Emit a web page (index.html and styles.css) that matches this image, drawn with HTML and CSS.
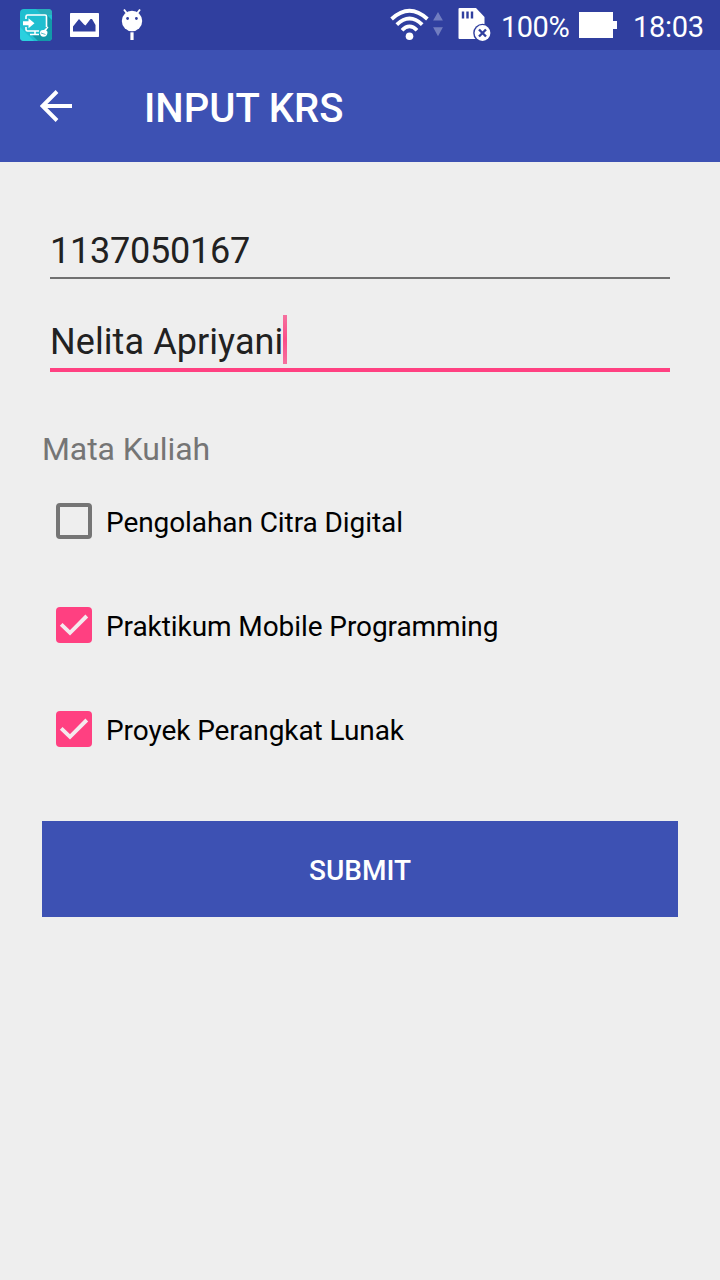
FILE: index.html
```html
<!DOCTYPE html>
<html lang="id">
<head>
<meta charset="utf-8">
<title>Input KRS</title>
<link rel="stylesheet" href="styles.css">
</head>
<body>
<div class="statusbar">
  <svg class="icon-cast" width="32" height="32" viewBox="0 0 32 32">
    <defs><clipPath id="tile"><rect width="32" height="32" rx="4"/></clipPath></defs>
    <g clip-path="url(#tile)">
      <rect width="32" height="32" fill="#1fbfd0"/>
      <path d="M0 18L14 32H0z" fill="#2bd0df"/>
      <path d="M26 5l6 6v21H18l-7-7h15z" fill="#129aa9"/>
      <path d="M16 0h16v6H22z" fill="#29aebb"/>
    </g>
    <path d="M6 10V7.500Q6 6 7.500 6H25Q26.500 6 26.500 7.500V18M6 18V20.500Q6 22 7.500 22H19M15 22v3M10 25.500h9" fill="none" stroke="#fff" stroke-width="1.600"/>
    <path d="M3 12.300h5.500V9.300l6 5-6 5v-3H3z" fill="#fff"/>
    <path d="M20 24q0-3 3-3h1l3.500-3.500 1 .8-2.300 3.200 1.300 1.300q0 5-4 5-3.500 0-3.500-4z" fill="#fff"/>
    <path d="M21 24l4.500 1.500" stroke="#159fae" stroke-width=".7"/>
  </svg>
  <svg class="icon-image" width="29" height="24" viewBox="0 0 29 24">
    <path fill="#fff" d="M.7 0h27.600q.7 0 .7.700v22.600q0 .7-.7.700H.700Q0 24 0 23.300V.700Q0 0 .7 0z"/>
    <path fill="#303f9f" d="M3 18.500V13.500L9 6l5 5.500 1.500 1 5-6.500h1.500l3.500 6v6.500z"/>
  </svg>
  <svg class="icon-droid" width="22" height="32" viewBox="0 0 22 32">
    <path d="M3 1.500l3 4M19 1.500l-3 4" stroke="#fff" stroke-width="1.900"/>
    <ellipse cx="11" cy="13" rx="10.200" ry="10.300" fill="#fff"/>
    <circle cx="6.600" cy="10.500" r="1.400" fill="#303f9f"/>
    <circle cx="15.400" cy="10.500" r="1.400" fill="#303f9f"/>
    <rect x="9.400" y="24.300" width="3.200" height="7.700" fill="#fff"/>
  </svg>
  <svg class="icon-wifi" width="54" height="34" viewBox="0 0 54 34">
    <g fill="none" stroke="#fff" stroke-width="3.800">
      <path d="M1.600 12Q19.500-4.500 37.400 12"/>
      <path d="M6.800 17.700Q19.500 5.500 32.200 17.700"/>
      <path d="M12 23.300Q19.500 15.500 27 23.300"/>
    </g>
    <circle cx="19.500" cy="29.300" r="3.800" fill="#fff"/>
    <path d="M48 5l4.900 8.600h-9.800zM43.100 20.200h9.800L48 29.200z" fill="#717dc0"/>
  </svg>
  <svg class="icon-sd" width="34" height="34" viewBox="0 0 34 34">
    <path d="M1.500 0H18l8.500 9v22H1.500Q.5 31 .5 30V1q0-1 1-1z" fill="#fff"/>
    <path d="M5 3.500v7M9.500 3.500v7M14 3.500v7" stroke="#303f9f" stroke-width="2.400"/>
    <circle cx="24.500" cy="25" r="9.300" fill="#303f9f"/>
    <circle cx="24.500" cy="25" r="7.900" fill="#fff"/>
    <path d="M21 21.500l7 7m0-7l-7 7" stroke="#303f9f" stroke-width="2.400"/>
  </svg>
  <span class="battery-text">100%</span>
  <svg class="icon-battery" width="38" height="26" viewBox="0 0 38 26">
    <path d="M0 0h34v9h4v8h-4v9H0z" fill="#fff"/>
  </svg>
  <span class="clock">18:03</span>
</div>
<header class="appbar">
  <svg class="icon-back" width="32" height="32" viewBox="0 0 32 32">
    <path d="M17 1.500L2.500 16 17 30.500M2.500 16H32" fill="none" stroke="#fff" stroke-width="3.900"/>
  </svg>
  <h1 class="title">INPUT KRS</h1>
</header>
<main class="form">
  <div class="field"><span class="value number">1137050167</span></div>
  <div class="field focused"><span class="value">Nelita Apriyani</span><span class="caret"></span></div>
  <div class="label">Mata Kuliah</div>
  <div class="options">
    <div class="option"><span class="box"></span><span class="option-text">Pengolahan Citra Digital</span></div>
    <div class="option"><span class="box checked"><svg width="36" height="36" viewBox="0 0 36 36"><path d="M5.200 17.300l8.800 8.500L30.800 9" fill="none" stroke="#f5eaee" stroke-width="3.900"/></svg></span><span class="option-text">Praktikum Mobile Programming</span></div>
    <div class="option"><span class="box checked"><svg width="36" height="36" viewBox="0 0 36 36"><path d="M5.200 17.300l8.800 8.500L30.800 9" fill="none" stroke="#f5eaee" stroke-width="3.900"/></svg></span><span class="option-text">Proyek Perangkat Lunak</span></div>
  </div>
  <button class="submit">SUBMIT</button>
</main>
</body>
</html>
```
FILE: styles.css
```css
* { box-sizing: border-box; }
body {
  margin: 0;
  width: 720px;
  height: 1280px;
  background: #eeeeee;
  font-family: Roboto, "Noto Sans", sans-serif;
  overflow: hidden;
  white-space: nowrap;
}
svg { display: block; flex: none; }
.statusbar {
  display: flex;
  align-items: flex-start;
  height: 50px;
  padding-left: 20px;
  background: #303f9f;
  color: #fff;
  font-size: 29px;
  line-height: 34px;
}
.icon-cast { margin-top: 9px; }
.icon-image { margin: 13px 0 0 18px; }
.icon-droid { margin: 8px 0 0 22px; }
.icon-wifi { margin: 7px 0 0 247px; }
.icon-sd { margin: 8px 0 0 14px; }
.battery-text {
  width: 68px;
  margin: 10px 0 0 9px;
  letter-spacing: -0.5px;
}
.icon-battery { margin: 12px 0 0 10px; }
.clock {
  margin: 10px 0 0 16px;
  letter-spacing: -0.3px;
}
.appbar {
  display: flex;
  align-items: center;
  height: 112px;
  padding-left: 40px;
  background: #3d51b3;
  color: #fff;
}
.title {
  margin: 6px 0 0 72px;
  font-size: 40px;
  font-weight: 500;
  line-height: 48px;
}
.form { padding: 65px 42px 0; }
.field {
  display: flex;
  align-items: flex-start;
  height: 52px;
  margin: 0 8px;
  border-bottom: 2px solid #717171;
  color: #212121;
  font-size: 36px;
  line-height: 48px;
}
.number { letter-spacing: -0.22px; }
.field.focused {
  height: 57px;
  margin-top: 36px;
  border-bottom: 4px solid #ff4081;
}
.focused .value {
  margin-top: 3px;
  letter-spacing: 0.08px;
}
.caret {
  width: 4px;
  height: 49px;
  background: linear-gradient(#f5719f, #fb4d88 50%, #f5719f);
}
.label {
  margin-top: 57px;
  color: #757575;
  font-size: 32px;
  letter-spacing: -0.1px;
  line-height: 40px;
}
.options { padding: 0 14px; }
.option {
  display: flex;
  align-items: center;
  height: 104px;
}
.box {
  width: 36px;
  height: 36px;
  border: 4px solid #757575;
  border-radius: 4px;
}
.box.checked {
  border: 0;
  background: #ff4081;
}
.option-text {
  margin: 4px 0 0 14px;
  color: #000;
  font-size: 28px;
  letter-spacing: -0.08px;
  line-height: 36px;
}
.submit {
  display: block;
  width: 100%;
  height: 96px;
  margin-top: 40px;
  padding: 4px 0 0;
  border: 0;
  background: #3d51b3;
  color: #fff;
  font: 500 28px/36px Roboto, sans-serif;
}
```
